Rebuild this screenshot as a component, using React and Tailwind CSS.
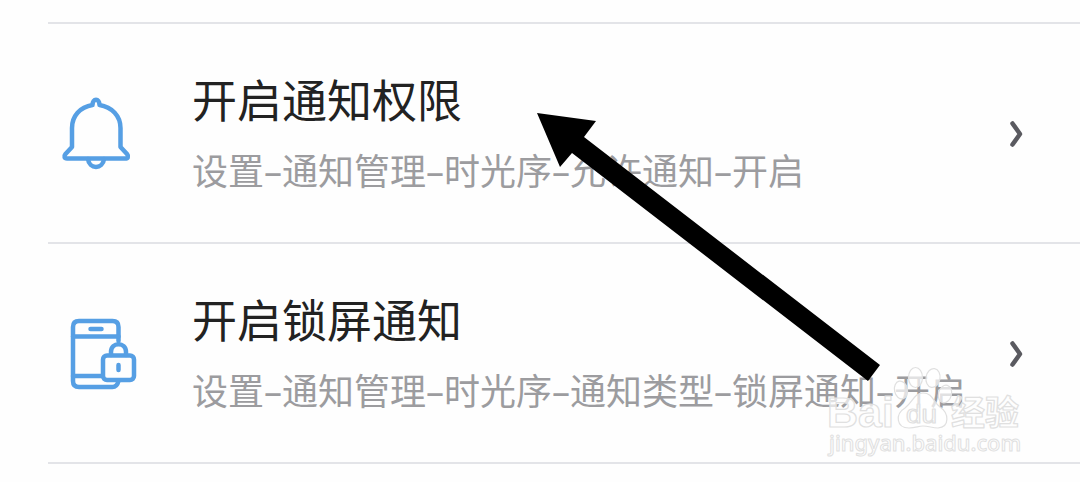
import { Fragment } from "react";

const BellIcon = () => (
  <svg
    className="w-[72px] h-[76px]"
    viewBox="60 95 72 76"
    fill="none"
    stroke="#569fe4"
    strokeWidth="4.500"
    strokeLinecap="round"
    strokeLinejoin="round"
  >
    <path d="M92.500 105C80 107 72 116 72 128V147L65.500 154C63.500 156.500 64.500 158.500 67 158.500H125C128 158.500 129 156.500 127 154L120.500 147V128C120.500 116 112 107 99.500 105C99.500 98 92.500 98 92.500 105" />
    <path d="M88 159C89 169.500 103 169.500 104 159" />
  </svg>
);

const PhoneLockIcon = () => (
  <svg
    className="w-[72px] h-[76px]"
    viewBox="68 315 72 76"
    fill="none"
    stroke="#569fe4"
    strokeWidth="4.500"
    strokeLinecap="round"
    strokeLinejoin="round"
  >
    <path d="M118.500 341V327Q118.500 321 112.500 321H79Q73 321 73 327V381Q73 387 79 387H112.500Q117 387 118.500 381" />
    <path d="M73 336.500H118.500M73 376H102M90.500 329H101.500" />
    <rect x="103" y="355.500" width="31" height="24.500" rx="4" />
    <path d="M111 355V352C111 341.500 126 341.500 126 352V355M118.500 365V370" />
  </svg>
);

const Chevron = () => (
  <svg className="mt-[2px] w-[18px] h-[30px]" viewBox="0 0 18 30" fill="none">
    <path d="M5.500 4.500L13 15L5.500 25.500" stroke="#5a5a60" strokeWidth="4.500" strokeLinecap="round" strokeLinejoin="round" />
  </svg>
);

const items = [
  { icon: BellIcon, offset: "pl-[12px]", title: "开启通知权限", path: ["设置", "通知管理", "时光序", "允许通知", "开启"] },
  { icon: PhoneLockIcon, offset: "pl-[20px]", title: "开启锁屏通知", path: ["设置", "通知管理", "时光序", "通知类型", "锁屏通知", "开启"] },
];

const SettingRow = ({ item }) => {
  const Icon = item.icon;

  return (
    <li className="flex h-[220px] items-center border-b-2 border-[#e3e4e8]">
      <div className={`w-[144px] shrink-0 ${item.offset}`}>
        <Icon />
      </div>
      <div className="flex-1 whitespace-nowrap">
        <h3 className="text-[45px] leading-[60px] text-[#222222]">{item.title}</h3>
        <p className="mt-[17px] h-[48px] text-[36px] leading-[48px] text-[#9c9c9f]">
          {item.path.map((step, i) => (
            <Fragment key={step}>
              {i > 0 && <span className="align-[1.5px] leading-none">–</span>}
              {step}
            </Fragment>
          ))}
        </p>
      </div>
      <div className="w-[73px] shrink-0">
        <Chevron />
      </div>
    </li>
  );
};

// Flecha que señala la primera opción
const Arrow = () => (
  <svg className="absolute left-0 top-0 h-[482px] w-[1080px]" viewBox="0 0 1080 482">
    <polygon points="537,113 596,121 584,137 880,365 868,381 572,153 560,167" fill="#000" />
  </svg>
);

const Watermark = () => (
  <svg
    className="absolute left-[820px] top-[360px] h-[104px] w-[210px]"
    viewBox="820 360 210 104"
    fill="#fff"
    fillOpacity="0.7"
    stroke="#e0e0e0"
    strokeWidth="1.200"
    strokeLinejoin="round"
    fontFamily="'Liberation Sans', 'Noto Sans CJK SC', sans-serif"
  >
    <ellipse cx="901" cy="390" rx="6.500" ry="9" transform="rotate(-12 901 390)" />
    <ellipse cx="915.500" cy="377.500" rx="7" ry="10" />
    <ellipse cx="933" cy="378" rx="7" ry="9.500" transform="rotate(10 933 378)" />
    <ellipse cx="945" cy="394" rx="6.500" ry="9" transform="rotate(15 945 394)" />
    <path d="M923 393C914 393 913 402 905 408C895 414 896 428 909 428C916 428 918 426 923 426C929 426 932 428 938 428C950 427 949 413 940 407C933 402 933 393 923 393Z" />
    <g fontWeight="700">
      <text x="827" y="427" fontSize="43" textLength="67" lengthAdjust="spacingAndGlyphs">Bai</text>
      <text x="906" y="423" fontSize="25" fontWeight="400" textLength="31" lengthAdjust="spacingAndGlyphs">du</text>
      <text x="951" y="425" fontSize="34" textLength="68">经验</text>
    </g>
    <text x="829" y="451" fontSize="22" strokeWidth="1" fontFamily="'Noto Sans', sans-serif" fontWeight="500" textLength="192" lengthAdjust="spacingAndGlyphs">jingyan.baidu.com</text>
  </svg>
);

export default function App() {
  return (
    <main className="relative h-[482px] overflow-hidden bg-[#fefefe] pt-[22px] pl-12 font-['Noto_Sans','Noto_Sans_CJK_SC',sans-serif]">
      <ul className="border-t-2 border-[#e3e4e8]">
        {items.map((item) => (
          <SettingRow key={item.title} item={item} />
        ))}
      </ul>
      <Arrow />
      <Watermark />
    </main>
  );
}
